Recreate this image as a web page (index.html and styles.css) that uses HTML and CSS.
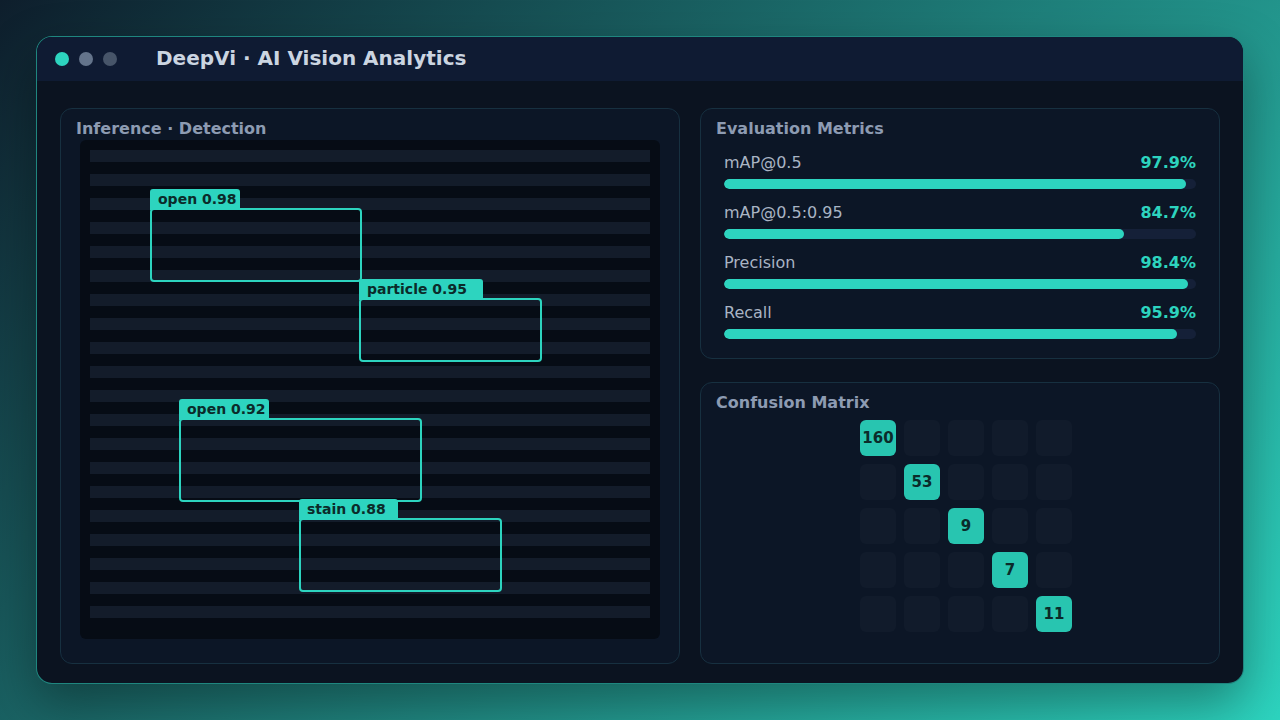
FILE: index.html
```html
<!DOCTYPE html>
<html lang="en">
<head>
    <meta charset="UTF-8">
    <title>DeepVi · AI Vision Analytics</title>
    <link rel="stylesheet" href="styles.css">
</head>
<body>

    <div class="window">
        <div class="titlebar">
            <div class="dots">
                <span class="dot dot-active"></span>
                <span class="dot dot-mid"></span>
                <span class="dot dot-dim"></span>
            </div>
            <h1 class="app-title">DeepVi · AI Vision Analytics</h1>
        </div>

        <div class="content">
            <div class="panel panel-inference">
                <h2 class="panel-title">Inference · Detection</h2>
                <div class="canvas">
                    <div class="stripes">
                        <div class="stripe"></div><div class="stripe"></div><div class="stripe"></div><div class="stripe"></div>
                        <div class="stripe"></div><div class="stripe"></div><div class="stripe"></div><div class="stripe"></div>
                        <div class="stripe"></div><div class="stripe"></div><div class="stripe"></div><div class="stripe"></div>
                        <div class="stripe"></div><div class="stripe"></div><div class="stripe"></div><div class="stripe"></div>
                        <div class="stripe"></div><div class="stripe"></div><div class="stripe"></div><div class="stripe"></div>
                    </div>

                    <div class="det" style="left: 70px; top: 68px; width: 212px; height: 74px;">
                        <span class="det-label" style="width: 90px;">open 0.98</span>
                    </div>
                    <div class="det" style="left: 279px; top: 158px; width: 183px; height: 64px;">
                        <span class="det-label" style="width: 124px;">particle 0.95</span>
                    </div>
                    <div class="det" style="left: 99px; top: 278px; width: 243px; height: 84px;">
                        <span class="det-label" style="width: 90px;">open 0.92</span>
                    </div>
                    <div class="det" style="left: 219px; top: 378px; width: 203px; height: 74px;">
                        <span class="det-label" style="width: 99px;">stain 0.88</span>
                    </div>
                </div>
            </div>

            <div class="panel panel-metrics">
                <h2 class="panel-title">Evaluation Metrics</h2>
                <div class="metrics">
                    <div class="metric">
                        <div class="metric-head">
                            <span class="metric-name">mAP@0.5</span>
                            <span class="metric-value">97.9%</span>
                        </div>
                        <div class="bar"><div class="bar-fill" style="width: 97.9%;"></div></div>
                    </div>
                    <div class="metric">
                        <div class="metric-head">
                            <span class="metric-name">mAP@0.5:0.95</span>
                            <span class="metric-value">84.7%</span>
                        </div>
                        <div class="bar"><div class="bar-fill" style="width: 84.7%;"></div></div>
                    </div>
                    <div class="metric">
                        <div class="metric-head">
                            <span class="metric-name">Precision</span>
                            <span class="metric-value">98.4%</span>
                        </div>
                        <div class="bar"><div class="bar-fill" style="width: 98.4%;"></div></div>
                    </div>
                    <div class="metric">
                        <div class="metric-head">
                            <span class="metric-name">Recall</span>
                            <span class="metric-value">95.9%</span>
                        </div>
                        <div class="bar"><div class="bar-fill" style="width: 95.9%;"></div></div>
                    </div>
                </div>
            </div>

            <div class="panel panel-matrix">
                <h2 class="panel-title">Confusion Matrix</h2>
                <div class="matrix">
                    <div class="cell cell-hit">160</div><div class="cell"></div><div class="cell"></div><div class="cell"></div><div class="cell"></div>
                    <div class="cell"></div><div class="cell cell-hit">53</div><div class="cell"></div><div class="cell"></div><div class="cell"></div>
                    <div class="cell"></div><div class="cell"></div><div class="cell cell-hit">9</div><div class="cell"></div><div class="cell"></div>
                    <div class="cell"></div><div class="cell"></div><div class="cell"></div><div class="cell cell-hit">7</div><div class="cell"></div>
                    <div class="cell"></div><div class="cell"></div><div class="cell"></div><div class="cell"></div><div class="cell cell-hit">11</div>
                </div>
            </div>
        </div>
    </div>

</body>
</html>
```

FILE: styles.css
```css
* {
    box-sizing: border-box;
}

html, body {
    margin: 0;
    height: 100%;
}

body {
    font-family: "DejaVu Sans", Verdana, sans-serif;
    background: linear-gradient(135deg, #0e1e2c 0%, #1e7b77 50%, #2dd4bf 100%);
    padding: 36px;
}

.window {
    width: 1208px;
    height: 648px;
    border: 1px solid rgba(45, 212, 191, 0.6);
    border-radius: 16px;
    background-color: #0b1320;
    overflow: hidden;
    box-shadow: 0 20px 50px rgba(0, 0, 0, 0.35);
}

.titlebar {
    height: 44px;
    background-color: #0f1b33;
    display: flex;
    align-items: center;
    padding-left: 18px;
}

.dots {
    display: flex;
    gap: 10px;
}

.dot {
    width: 14px;
    height: 14px;
    border-radius: 50%;
}

.dot-active {
    background-color: #2dd4bf;
}

.dot-mid {
    background-color: #64748b;
}

.dot-dim {
    background-color: #475569;
}

.app-title {
    margin: 0 0 2px 39px;
    font-size: 20px;
    font-weight: bold;
    color: #cbd5e1;
}

.content {
    display: grid;
    grid-template-columns: 620px 520px;
    grid-template-rows: 251px 282px;
    column-gap: 20px;
    row-gap: 23px;
    padding: 27px 23px 0 23px;
}

.panel {
    background-color: #0c1626;
    border: 1px solid #173040;
    border-radius: 12px;
    padding: 10px 15px;
}

.panel-inference {
    grid-row: 1 / 3;
}

.panel-title {
    margin: 0;
    font-size: 16px;
    line-height: 20px;
    font-weight: bold;
    color: #8d9bb2;
}

/* detection canvas */

.canvas {
    position: relative;
    margin: 1px 4px 0 4px;
    height: 499px;
    background-color: #060c15;
    border-radius: 6px;
    padding: 10px;
}

.stripes {
    display: flex;
    flex-direction: column;
    gap: 12px;
}

.stripe {
    height: 12px;
    background-color: #131c2a;
}

.det {
    position: absolute;
    border: 2px solid #2dd4bf;
    border-radius: 4px;
}

.det-label {
    position: absolute;
    left: -2px;
    bottom: 100%;
    height: 21px;
    line-height: 21px;
    padding-left: 8px;
    background-color: #2dd4bf;
    color: #0b2b2a;
    font-size: 14px;
    font-weight: bold;
    border-radius: 3px 3px 0 0;
    white-space: nowrap;
}

/* metrics */

.metrics {
    padding: 14px 8px 0 8px;
    display: flex;
    flex-direction: column;
    gap: 14px;
}

.metric-head {
    display: flex;
    justify-content: space-between;
    line-height: 20px;
    font-size: 16px;
}

.metric-name {
    color: #a9b4c4;
}

.metric-value {
    color: #2dd4bf;
    font-weight: bold;
}

.bar {
    margin-top: 6px;
    height: 10px;
    border-radius: 5px;
    background-color: #152038;
    overflow: hidden;
}

.bar-fill {
    height: 100%;
    border-radius: 5px;
    background-color: #2dd4bf;
}

/* confusion matrix */

.matrix {
    margin: 7px auto 0 auto;
    padding-left: 12px;
    width: 224px;
    display: grid;
    grid-template-columns: repeat(5, 36px);
    grid-auto-rows: 36px;
    gap: 8px;
}

.cell {
    border-radius: 6px;
    background-color: #111b2b;
    display: flex;
    align-items: center;
    justify-content: center;
    font-size: 15px;
    font-weight: bold;
    color: #0b2b2a;
}

.cell-hit {
    background-color: #28c5b0;
}
```
